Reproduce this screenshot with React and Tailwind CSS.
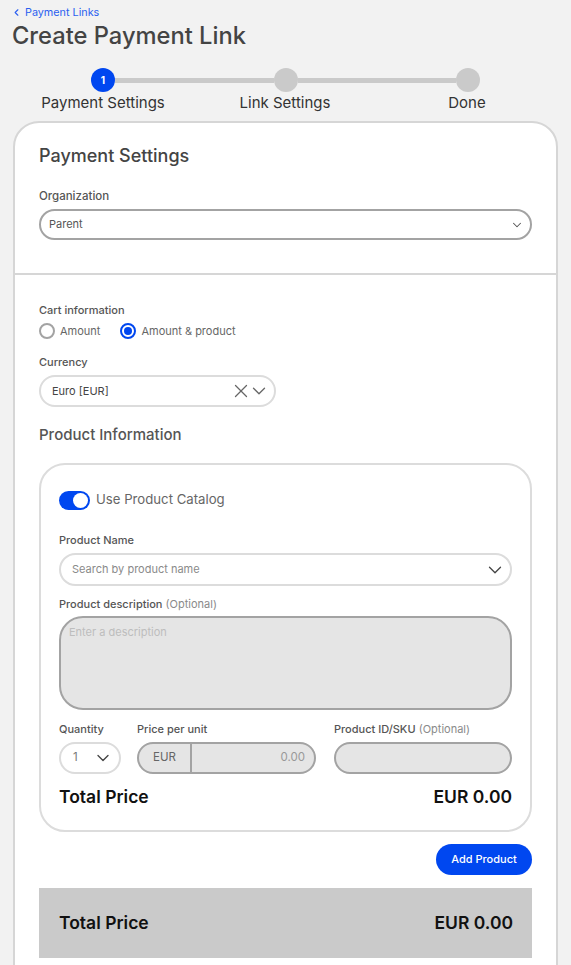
import React from "react";
import { ChevronLeft, ChevronDown, X } from "lucide-react";

const Label = ({ children, optional, size = "text-[11px]", className = "" }) => (
  <p className={`${size} leading-[14px] font-medium text-[#555] ${className}`}>
    {children}
    {optional && <span className="font-normal text-[#8a8a8a]"> (Optional)</span>}
  </p>
);

const Stepper = () => (
  <div className="mt-[17px]">
    <div className="flex items-center ml-[91px] w-[389px]">
      <div className="flex items-center justify-center w-6 h-6 rounded-full shrink-0 bg-[#0047f0] text-[10px] font-bold text-white">
        1
      </div>
      <div className="flex-1 h-[5px] bg-[#cacaca]" />
      <div className="w-6 h-6 rounded-full shrink-0 bg-[#cacaca]" />
      <div className="flex-1 h-[5px] bg-[#cacaca]" />
      <div className="w-6 h-6 rounded-full shrink-0 bg-[#cacaca]" />
    </div>
    <div className="grid grid-cols-[182px_182px_182px] ml-[12px] mt-[1px] text-[15px] leading-[20px] text-[#333] text-center">
      <span>Payment Settings</span>
      <span>Link Settings</span>
      <span>Done</span>
    </div>
  </div>
);

const Product = () => (
  <div className="mt-[18px] h-[369px] px-[18px] pt-[25px] bg-white border-2 border-[#dcdcdc] rounded-[26px]">
    <div className="flex items-center gap-[6px] h-5">
      <div className="flex items-center justify-end w-[31px] h-[19px] pr-[2px] rounded-full bg-[#0047f0]">
        <div className="w-[15px] h-[15px] rounded-full bg-white" />
      </div>
      <span className="text-[13.2px] text-[#666]">Use Product Catalog</span>
    </div>

    <Label className="mt-[23px]">Product Name</Label>
    <div className="flex items-center justify-between h-[33px] mt-[6px] pl-[11px] pr-[4px] border-2 border-[#dcdcdc] rounded-full">
      <span className="text-[11px] text-[#8a8a8a]">Search by product name</span>
      <ChevronDown size={22} strokeWidth={1.4} className="text-[#444]" />
    </div>

    <Label className="mt-[11px]" optional>Product description</Label>
    <div className="h-[94px] mt-[5px] px-[8px] pt-[6px] bg-[#e5e5e5] border-2 border-[#a3a3a3] rounded-[24px] text-[11px] text-[#bdbdbd]">
      Enter a description
    </div>

    <div className="grid grid-cols-[78px_197px_178px] mt-[12px]">
      <div className="w-[62px]">
        <Label>Quantity</Label>
        <div className="flex items-center justify-between h-[32px] mt-[6px] pl-[12px] pr-[6px] border-2 border-[#dcdcdc] rounded-full">
          <span className="text-[11.5px] text-[#777]">1</span>
          <ChevronDown size={20} strokeWidth={1.6} className="text-[#444]" />
        </div>
      </div>
      <div className="w-[179px]">
        <Label>Price per unit</Label>
        <div className="flex items-center h-[32px] mt-[6px] bg-[#e5e5e5] border-2 border-[#a3a3a3] rounded-full">
          <span className="flex items-center w-[53px] h-full pl-[14px] border-r-2 border-[#a3a3a3] text-[11.5px] text-[#666]">EUR</span>
          <span className="flex-1 pr-[9px] text-right text-[11.5px] text-[#999]">0.00</span>
        </div>
      </div>
      <div>
        <Label optional>Product ID/SKU</Label>
        <div className="h-[32px] mt-[6px] bg-[#e5e5e5] border-2 border-[#a3a3a3] rounded-full" />
      </div>
    </div>

    <div className="flex items-center justify-between mt-[11px] text-[17.5px] leading-[24px] font-semibold text-[#111]">
      <span>Total Price</span>
      <span>EUR 0.00</span>
    </div>
  </div>
);

const App = () => {
  return (
    <div className="h-[965px] overflow-hidden bg-[#f2f2f2] font-['Inter',sans-serif]">
      <div className="flex items-center gap-[3px] pt-[6px] pl-[11px] text-[10.8px] leading-[13px] text-[#2b5ff0]">
        <ChevronLeft size={11} strokeWidth={2.4} />
        <span>Payment Links</span>
      </div>
      <h1 className="ml-[12px] mt-[2px] text-[23.7px] leading-[30px] font-medium text-[#444]">
        Create Payment Link
      </h1>

      <Stepper />

      <div className="w-[545px] h-[1000px] ml-[13px] mt-[8px] bg-white border-2 border-[#d6d6d6] rounded-[26px]">
        <div className="h-[152px] px-[24px] border-b-2 border-[#d6d6d6]">
          <h2 className="pt-[21px] text-[18px] leading-[24px] font-medium text-[#444]">Payment Settings</h2>
          <Label size="text-[11.5px]" className="mt-[21px]">Organization</Label>
          <div className="flex items-center justify-between h-[31px] mt-[6px] pl-[8px] pr-[6px] border-2 border-[#a3a3a3] rounded-full">
            <span className="text-[11px] text-[#555]">Parent</span>
            <ChevronDown size={14} strokeWidth={1.8} className="text-[#555]" />
          </div>
        </div>

        <div className="px-[24px] pt-[28px]">
          <Label>Cart information</Label>
          <div className="flex items-center h-[18px] mt-[5px] text-[11px] text-[#666]">
            <span className="w-4 h-4 rounded-full border-2 border-[#a3a3a3]" />
            <span className="ml-[5px]">Amount</span>
            <span className="flex items-center justify-center w-4 h-4 ml-[20px] rounded-full border-2 border-[#0047f0]">
              <span className="w-2 h-2 rounded-full bg-[#0047f0]" />
            </span>
            <span className="ml-[5px]">Amount &amp; product</span>
          </div>

          <Label className="mt-[15px]">Currency</Label>
          <div className="flex items-center justify-between w-[237px] h-[32px] mt-[6px] pl-[11px] pr-[4px] border-2 border-[#dcdcdc] rounded-full">
            <span className="text-[11px] text-[#444]">Euro [EUR]</span>
            <span className="flex items-center -space-x-1 text-[#666]">
              <X size={22} strokeWidth={1.4} />
              <ChevronDown size={22} strokeWidth={1.4} />
            </span>
          </div>

          <h3 className="mt-[18px] text-[15px] leading-[20px] font-medium text-[#555]">Product Information</h3>

          <Product />

          <div className="flex justify-end mt-[12px]">
            <button className="h-[31px] w-[96px] rounded-full bg-[#0047f0] text-[11px] font-medium text-white">
              Add Product
            </button>
          </div>

          <div className="flex items-center justify-between h-[70px] mt-[13px] pl-[20px] pr-[19px] bg-[#cacaca] text-[17.5px] font-semibold text-[#111]">
            <span>Total Price</span>
            <span>EUR 0.00</span>
          </div>
        </div>
      </div>
    </div>
  );
};

export default App;
